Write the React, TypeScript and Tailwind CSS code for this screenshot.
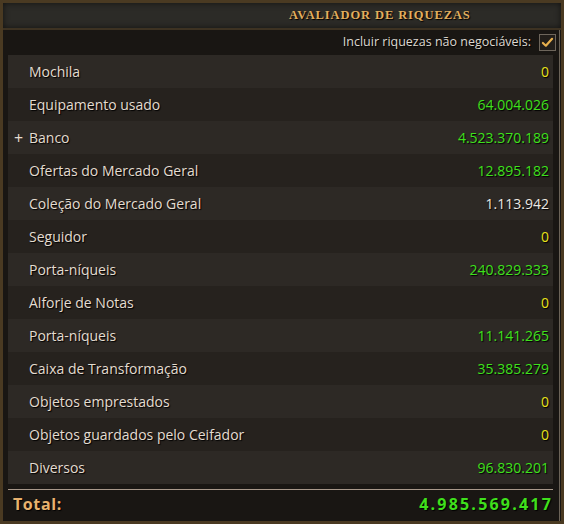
import React from 'react';

interface WealthRow {
  label: string;
  value: string;
  tone: 'green' | 'yellow' | 'white';
  expandable?: boolean;
}

const rows: WealthRow[] = [
  { label: 'Mochila', value: '0', tone: 'yellow' },
  { label: 'Equipamento usado', value: '64.004.026', tone: 'green' },
  { label: 'Banco', value: '4.523.370.189', tone: 'green', expandable: true },
  { label: 'Ofertas do Mercado Geral', value: '12.895.182', tone: 'green' },
  { label: 'Coleção do Mercado Geral', value: '1.113.942', tone: 'white' },
  { label: 'Seguidor', value: '0', tone: 'yellow' },
  { label: 'Porta-níqueis', value: '240.829.333', tone: 'green' },
  { label: 'Alforje de Notas', value: '0', tone: 'yellow' },
  { label: 'Porta-níqueis', value: '11.141.265', tone: 'green' },
  { label: 'Caixa de Transformação', value: '35.385.279', tone: 'green' },
  { label: 'Objetos emprestados', value: '0', tone: 'yellow' },
  { label: 'Objetos guardados pelo Ceifador', value: '0', tone: 'yellow' },
  { label: 'Diversos', value: '96.830.201', tone: 'green' },
];

const toneClass = {
  green: 'text-[#3fe01c]',
  yellow: 'text-[#e8e21a]',
  white: 'text-[#ece8e2]',
};

export default function App() {
  return (
    <div className="w-[564px] h-[524px] bg-[#4a3a22] p-[3px] font-['Open_Sans','Noto_Sans',sans-serif]">
      <div className="flex h-full flex-col bg-[#191613]">
        {/* 标题栏 */}
        <div className="h-[27px] border-b-2 border-[#3d3222] bg-[#2c2b27] flex items-center pl-[286px] shadow-[inset_0_0_6px_rgba(0,0,0,0.6)]">
          <span className="font-['Liberation_Serif',serif] text-[12.5px] font-bold tracking-[0.9px] text-[#e2ae5e] [text-shadow:1px_1px_1px_#000]">
            AVALIADOR DE RIQUEZAS
          </span>
        </div>

        <div className="flex flex-1 flex-col border-r border-[#6b6358] mr-[1px]">
          {/* 复选框 */}
          <div className="h-[23px] flex items-center justify-end gap-[8px] pr-[3px] mt-[1px]">
            <span className="text-[12.5px] text-[#ddd8d0] [text-shadow:1px_1px_1px_#000]">Incluir riquezas não negociáveis:</span>
            <div className="w-[17px] h-[17px] border border-[#6e665c] bg-[#221e1a] flex items-center justify-center">
              <svg width="13" height="11" viewBox="0 0 14 12">
                <path d="M2 6.5 L5.2 9.5 L12 2" fill="none" stroke="#e8b04e" strokeWidth="2.4" strokeLinecap="round" strokeLinejoin="round" />
              </svg>
            </div>
          </div>

          {/* 列表 */}
          <div className="ml-[5px] mr-[6px] mt-[1px] flex flex-col">
            {rows.map((row, i) => (
              <div
                key={i}
                className={`h-[33px] flex items-center justify-between pr-[4px] ${i % 2 === 0 ? 'bg-[#2d2925]' : 'bg-[#26221e]'}`}
              >
                <div className="flex items-center">
                  <span className="w-[21px] text-center text-[16px] leading-none text-[#e4dcd0]">{row.expandable ? '+' : ''}</span>
                  <span className="text-[14px] text-[#e4dcd0] [text-shadow:1px_1px_1px_#000]">{row.label}</span>
                </div>
                <span className={`text-[14px] ${toneClass[row.tone]} [text-shadow:1px_1px_1px_#000]`}>{row.value}</span>
              </div>
            ))}
          </div>

          {/* 合计 */}
          <div className="ml-[5px] mr-[6px] mt-[5px] border-t border-[#a8988a]"></div>
          <div className="flex flex-1 items-center justify-between pl-[10px] pr-[6px] pb-[3px]">
            <span className="text-[16px] font-bold tracking-[0.6px] text-[#e8b26e] [text-shadow:1px_1px_1px_#000]">Total:</span>
            <span className="text-[16px] font-bold tracking-[2.2px] text-[#3fe01c] [text-shadow:1px_1px_1px_#000]">4.985.569.417</span>
          </div>
        </div>
      </div>
    </div>
  );
}
